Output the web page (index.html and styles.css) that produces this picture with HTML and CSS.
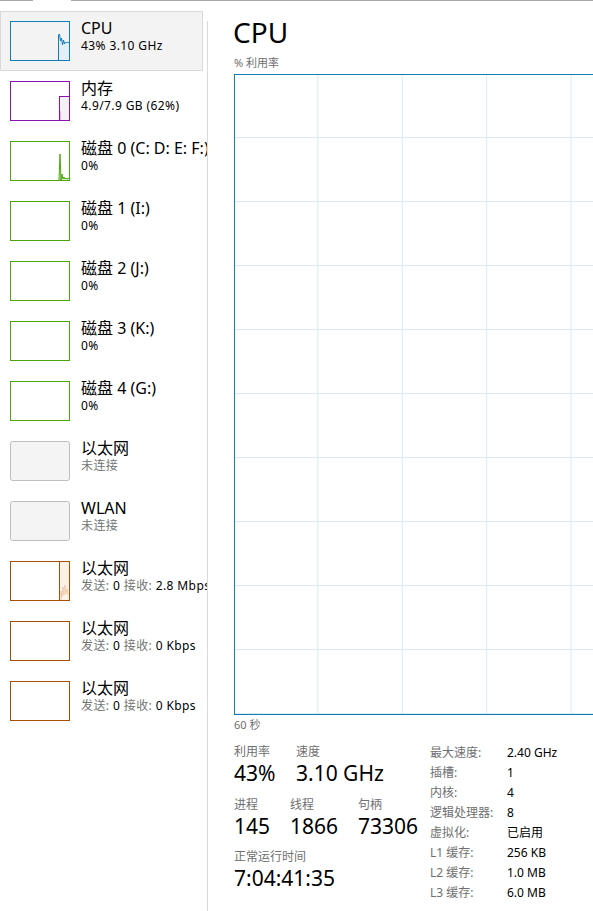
FILE: index.html
```html
<!DOCTYPE html>
<html lang="zh-CN">
<head>
<meta charset="utf-8">
<title>任务管理器 - 性能</title>
<link rel="stylesheet" href="styles.css">
</head>
<body>
<div class="topbar"><span class="seg seg-a"></span><span class="seg seg-gap"></span><span class="seg seg-b"></span></div>
<div class="app">
  <nav class="sidebar">
    <div class="item selected">
      <svg class="thumb" viewBox="0 0 60 40" width="60" height="40">
        <path d="M48.5 39.5 L48.5 14 L49.5 13 L50.5 20 L51.5 17 L52.5 24 L53.5 19 L54.5 23 L55.5 21 L56.5 22 L57.5 21 L59 22 L59 39.5 Z" fill="#e3eef6"/>
        <polyline points="48.5,39.5 48.5,14 49.5,13 50.5,20 51.5,17 52.5,24 53.5,19 54.5,23 55.5,21 56.5,22 57.5,21 59,22" fill="none" stroke="#117dbb" stroke-width="1"/>
        <rect x="0.5" y="0.5" width="59" height="39" fill="none" stroke="#117dbb"/>
      </svg>
      <div class="info"><div class="name">CPU</div><div class="sub">43% 3.10 GHz</div></div>
    </div>
    <div class="item">
      <svg class="thumb" viewBox="0 0 60 40" width="60" height="40">
        <rect x="49.5" y="15.5" width="10" height="24" fill="#f3f1f3" stroke="#8b12ae"/>
        <line x1="50.5" y1="30" x2="50.5" y2="39" stroke="#d9b8e3"/>
        <rect x="0.5" y="0.5" width="59" height="39" fill="none" stroke="#8b12ae"/>
      </svg>
      <div class="info"><div class="name">内存</div><div class="sub">4.9/7.9 GB (62%)</div></div>
    </div>
    <div class="item">
      <svg class="thumb" viewBox="0 0 60 40" width="60" height="40">
        <path d="M49 39.5 L50 13 L51 39 L52 33 L53 38 L54 36 L55 38 L56 37 L57 38 L59 37 L59 39.5 Z" fill="#dcecd0"/>
        <polyline points="49,39.5 50,13 51,39 52,33 53,38 54,36 55,38 56,37 57,38 59,37" fill="none" stroke="#4da60c" stroke-width="1"/>
        <rect x="0.5" y="0.5" width="59" height="39" fill="none" stroke="#4da60c"/>
      </svg>
      <div class="info"><div class="name">磁盘 0 (C: D: E: F:)</div><div class="sub">0%</div></div>
    </div>
    <div class="item">
      <svg class="thumb" viewBox="0 0 60 40" width="60" height="40"><rect x="0.5" y="0.5" width="59" height="39" fill="none" stroke="#4da60c"/></svg>
      <div class="info"><div class="name">磁盘 1 (I:)</div><div class="sub">0%</div></div>
    </div>
    <div class="item">
      <svg class="thumb" viewBox="0 0 60 40" width="60" height="40"><rect x="0.5" y="0.5" width="59" height="39" fill="none" stroke="#4da60c"/></svg>
      <div class="info"><div class="name">磁盘 2 (J:)</div><div class="sub">0%</div></div>
    </div>
    <div class="item">
      <svg class="thumb" viewBox="0 0 60 40" width="60" height="40"><rect x="0.5" y="0.5" width="59" height="39" fill="none" stroke="#4da60c"/></svg>
      <div class="info"><div class="name">磁盘 3 (K:)</div><div class="sub">0%</div></div>
    </div>
    <div class="item">
      <svg class="thumb" viewBox="0 0 60 40" width="60" height="40"><rect x="0.5" y="0.5" width="59" height="39" fill="none" stroke="#4da60c"/></svg>
      <div class="info"><div class="name">磁盘 4 (G:)</div><div class="sub">0%</div></div>
    </div>
    <div class="item">
      <svg class="thumb" viewBox="0 0 60 40" width="60" height="40"><rect x="0.5" y="0.5" width="59" height="39" rx="2" fill="#f4f4f4" stroke="#bdbdbd"/></svg>
      <div class="info"><div class="name">以太网</div><div class="sub muted">未连接</div></div>
    </div>
    <div class="item">
      <svg class="thumb" viewBox="0 0 60 40" width="60" height="40"><rect x="0.5" y="0.5" width="59" height="39" rx="2" fill="#f4f4f4" stroke="#bdbdbd"/></svg>
      <div class="info"><div class="name">WLAN</div><div class="sub muted">未连接</div></div>
    </div>
    <div class="item">
      <svg class="thumb" viewBox="0 0 60 40" width="60" height="40">
        <rect x="49" y="1" width="10" height="38" fill="#fcf1e6"/>
        <line x1="49.5" y1="1" x2="49.5" y2="39" stroke="#a74f01"/>
        <polyline points="51,39 51,30 52,36 53,26 54,34 55,24 56,33 57,28 58,34" fill="none" stroke="#e3b58b" stroke-width="1" stroke-dasharray="1 1"/>
        <rect x="0.5" y="0.5" width="59" height="39" fill="none" stroke="#a74f01"/>
      </svg>
      <div class="info"><div class="name">以太网</div><div class="sub"><span class="muted">发送:</span> 0 <span class="muted">接收:</span> 2.8 Mbps</div></div>
    </div>
    <div class="item">
      <svg class="thumb" viewBox="0 0 60 40" width="60" height="40"><rect x="0.5" y="0.5" width="59" height="39" fill="none" stroke="#a74f01"/></svg>
      <div class="info"><div class="name">以太网</div><div class="sub"><span class="muted">发送:</span> 0 <span class="muted">接收:</span> 0 Kbps</div></div>
    </div>
    <div class="item">
      <svg class="thumb" viewBox="0 0 60 40" width="60" height="40"><rect x="0.5" y="0.5" width="59" height="39" fill="none" stroke="#a74f01"/></svg>
      <div class="info"><div class="name">以太网</div><div class="sub"><span class="muted">发送:</span> 0 <span class="muted">接收:</span> 0 Kbps</div></div>
    </div>
  </nav>
  <div class="divider"></div>
  <main class="main">
    <h1 class="title">CPU</h1>
    <div class="caption">% 利用率</div>
    <div class="graph"></div>
    <div class="caption axis">60 秒</div>
    <div class="stats">
      <div class="stats-left">
        <div class="row">
          <div class="stat w62"><div class="label">利用率</div><div class="value">43%</div></div>
          <div class="stat"><div class="label">速度</div><div class="value">3.10 GHz</div></div>
        </div>
        <div class="row">
          <div class="stat w56"><div class="label">进程</div><div class="value">145</div></div>
          <div class="stat w68"><div class="label">线程</div><div class="value">1866</div></div>
          <div class="stat"><div class="label">句柄</div><div class="value">73306</div></div>
        </div>
        <div class="row row-last">
          <div class="stat"><div class="label">正常运行时间</div><div class="value">7:04:41:35</div></div>
        </div>
      </div>
      <dl class="specs">
        <dt>最大速度:</dt><dd>2.40 GHz</dd>
        <dt>插槽:</dt><dd>1</dd>
        <dt>内核:</dt><dd>4</dd>
        <dt>逻辑处理器:</dt><dd>8</dd>
        <dt>虚拟化:</dt><dd>已启用</dd>
        <dt>L1 缓存:</dt><dd>256 KB</dd>
        <dt>L2 缓存:</dt><dd>1.0 MB</dd>
        <dt>L3 缓存:</dt><dd>6.0 MB</dd>
      </dl>
    </div>
  </main>
</div>
</body>
</html>
```
FILE: styles.css
```css
html, body {
  margin: 0;
  padding: 0;
  background: #ffffff;
  overflow: hidden;
}
body {
  width: 593px;
  height: 911px;
  font-family: "Noto Sans", "Noto Sans CJK SC", sans-serif;
  color: #000000;
}
.topbar {
  display: flex;
  height: 1px;
}
.seg { display: block; height: 1px; }
.seg-a { width: 33px; background: #a8a8a8; }
.seg-gap { width: 38px; }
.seg-b { flex: 1; background: #a8a8a8; }

.app {
  display: flex;
  height: 910px;
}
.sidebar {
  width: 207px;
  flex: none;
  padding-top: 10px;
  overflow: hidden;
  box-sizing: border-box;
}
.item {
  width: 203px;
  height: 60px;
  box-sizing: border-box;
  border: 1px solid transparent;
  padding: 9px 0 0 9px;
  display: flex;
  align-items: flex-start;
  white-space: nowrap;
}
.item.selected {
  background: #f3f3f3;
  border-color: #dadada;
}
.thumb {
  display: block;
  flex: none;
}
.info {
  margin-left: 11px;
  margin-top: -3px;
}
.name {
  font-size: 16px;
  line-height: 20px;
}
.sub {
  font-size: 12px;
  line-height: 16px;
  letter-spacing: 0.4px;
}
.muted { color: #737373; }

.divider {
  width: 1px;
  flex: none;
  margin-top: 20px;
  background: #dadada;
}
.main {
  flex: 1;
  min-width: 0;
  padding: 14px 0 0 25px;
  overflow: hidden;
}
.title {
  margin: 0;
  font-size: 28px;
  font-weight: normal;
  line-height: 34px;
}
.caption {
  margin-top: 6px;
  padding-left: 1px;
  font-size: 11px;
  line-height: 16px;
  color: #6f6f6f;
}
.caption.axis { margin-top: 2px; }
.graph {
  margin-top: 3px;
  margin-left: 1px;
  width: 846px;
  height: 641px;
  box-sizing: border-box;
  border: 1px solid #117dbb;
  background-color: #ffffff;
  background-image:
    linear-gradient(to right, #d9eaf4 1px, transparent 1px),
    linear-gradient(to bottom, #d9eaf4 1px, transparent 1px);
  background-size: 84.4px 64px;
  background-origin: border-box;
  background-position: -1px -1px;
}
.stats {
  display: flex;
  align-items: flex-start;
  margin-top: 11px;
  padding-left: 1px;
}
.stats-left {
  width: 196px;
  flex: none;
}
.row {
  display: flex;
}
.row + .row { margin-top: 11px; }
.row.row-last { margin-top: 10px; }
.w62 { width: 62px; }
.w56 { width: 56px; }
.w68 { width: 68px; }
.label {
  font-size: 12px;
  line-height: 16px;
  color: #6f6f6f;
}
.value {
  font-size: 21px;
  line-height: 26px;
}
.specs {
  margin: -1px 0 0 0;
  display: grid;
  grid-template-columns: 77px auto;
  font-size: 12px;
  line-height: 20px;
}
.specs dt { color: #6f6f6f; }
.specs dd { margin: 0; white-space: nowrap; }
```
